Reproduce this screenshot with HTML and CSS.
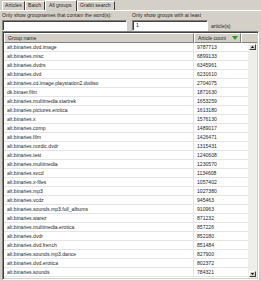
FILE: index.html
```html
<!DOCTYPE html>
<html>
<head>
<meta charset="utf-8">
<link rel="stylesheet" href="styles.css">
</head>
<body>
<div class="win">
  <div class="tabs">
    <div class="tab t1">Articles</div>
    <div class="tab t2">Batch</div>
    <div class="tab sel t3">All groups</div>
    <div class="tab t4">Grabit search</div>
  </div>
  <div class="panel">
    <div class="filters">
      <div class="f1">
        <div class="lbl">Only show groupnames that contain the word(s):</div>
        <div class="input in1"></div>
      </div>
      <div class="f2">
        <div class="lbl">Only show groups with at least</div>
        <div class="inrow">
          <div class="input in2">1</div>
          <span class="unit">article(s)</span>
        </div>
      </div>
    </div>
    <div class="list">
      <div class="header">
        <div class="hc c1">Group name</div>
        <div class="hc c2">Article count<svg class="sort" width="6" height="4" viewBox="0 0 6 4"><polygon points="0,0 6,0 3,4" fill="#1fa31f"/></svg></div>
        <div class="hc c3"></div>
      </div>
      <div class="lbody">
        <div class="rows" id="rows">
          <div class="row"><span class="c1">alt.binaries.dvd.image</span><span class="c2">9787713</span></div>
          <div class="row"><span class="c1">alt.binaries.misc</span><span class="c2">6899133</span></div>
          <div class="row"><span class="c1">alt.binaries.dvdrs</span><span class="c2">6345961</span></div>
          <div class="row"><span class="c1">alt.binaries.dvd</span><span class="c2">6231610</span></div>
          <div class="row"><span class="c1">alt.binaries.cd.image.playstation2.dvdiso</span><span class="c2">2704075</span></div>
          <div class="row"><span class="c1">dk.binaer.film</span><span class="c2">1871630</span></div>
          <div class="row"><span class="c1">alt.binaries.multimedia.startrek</span><span class="c2">1653259</span></div>
          <div class="row"><span class="c1">alt.binaries.pictures.erotica</span><span class="c2">1613180</span></div>
          <div class="row"><span class="c1">alt.binaries.x</span><span class="c2">1576130</span></div>
          <div class="row"><span class="c1">alt.binaries.comp</span><span class="c2">1489017</span></div>
          <div class="row"><span class="c1">alt.binaries.film</span><span class="c2">1426471</span></div>
          <div class="row"><span class="c1">alt.binaries.nordic.dvdr</span><span class="c2">1315431</span></div>
          <div class="row"><span class="c1">alt.binaries.test</span><span class="c2">1240608</span></div>
          <div class="row"><span class="c1">alt.binaries.multimedia</span><span class="c2">1230570</span></div>
          <div class="row"><span class="c1">alt.binaries.svcd</span><span class="c2">1134608</span></div>
          <div class="row"><span class="c1">alt.binaries.x-files</span><span class="c2">1057402</span></div>
          <div class="row"><span class="c1">alt.binaries.mp3</span><span class="c2">1027380</span></div>
          <div class="row"><span class="c1">alt.binaries.vcdz</span><span class="c2">945463</span></div>
          <div class="row"><span class="c1">alt.binaries.sounds.mp3.full_albums</span><span class="c2">910963</span></div>
          <div class="row"><span class="c1">alt.binaries.warez</span><span class="c2">871232</span></div>
          <div class="row"><span class="c1">alt.binaries.multimedia.erotica</span><span class="c2">857226</span></div>
          <div class="row"><span class="c1">alt.binaries.dvdr</span><span class="c2">852180</span></div>
          <div class="row"><span class="c1">alt.binaries.dvd.french</span><span class="c2">851484</span></div>
          <div class="row"><span class="c1">alt.binaries.sounds.mp3.dance</span><span class="c2">827900</span></div>
          <div class="row"><span class="c1">alt.binaries.dvd.erotica</span><span class="c2">802372</span></div>
          <div class="row"><span class="c1">alt.binaries.sounds</span><span class="c2">784321</span></div>
        </div>
        <div class="scroll">
          <div class="sbtn"><svg width="5" height="3" viewBox="0 0 5 3"><polygon points="2.5,0 5,3 0,3" fill="#000"/></svg></div>
          <div class="track"></div>
          <div class="sbtn"><svg width="5" height="3" viewBox="0 0 5 3"><polygon points="0,0 5,0 2.5,3" fill="#000"/></svg></div>
        </div>
      </div>
    </div>
  </div>
</div>
</body>
</html>
```
FILE: styles.css
```css
html, body {
  margin: 0;
  padding: 0;
}
body {
  width: 261px;
  height: 281px;
  overflow: hidden;
  background: #d4d0c8;
  font-family: "Liberation Sans", Arial, sans-serif;
  font-size: 5.1px;
  color: #262626;
}
.win {
  display: flex;
  flex-direction: column;
  height: 281px;
}
.tabs {
  display: flex;
  align-items: flex-end;
  height: 10px;
  padding-left: 2px;
  position: relative;
  z-index: 1;
}
.tab {
  box-sizing: border-box;
  height: 9px;
  line-height: 7px;
  padding-left: 2px;
  border-top: 1px solid #fff;
  border-left: 1px solid #fff;
  border-right: 1px solid #404040;
  white-space: nowrap;
}
.t1 { width: 23px; }
.t2 { width: 20px; }
.t3 { width: 32px; }
.t4 { width: 38px; }
.tab.sel {
  height: 11px;
  margin-bottom: -1px;
  line-height: 8px;
  padding-left: 3px;
  background: #d4d0c8;
}
.panel {
  flex: 1;
  border-top: 1px solid #fff;
  padding: 0 2px 0 2px;
  display: flex;
  flex-direction: column;
}
.filters {
  display: flex;
  gap: 5px;
  padding-top: 1px;
}
.lbl {
  line-height: 7px;
  height: 7px;
  white-space: nowrap;
}
.input {
  box-sizing: border-box;
  height: 11px;
  margin-top: 1px;
  background: #fff;
  border-top: 1px solid #808080;
  border-left: 1px solid #808080;
  border-right: 1px solid #fff;
  border-bottom: 1px solid #fff;
  box-shadow: inset 1px 1px 0 #404040;
  line-height: 9px;
  padding-left: 3px;
}
.in1 { width: 125px; }
.in2 { width: 76px; }
.inrow {
  display: flex;
  align-items: center;
  gap: 3px;
}
.unit { margin-top: 2px; }
.list {
  margin-top: 0px;
  width: 257px;
  height: 249px;
  box-sizing: border-box;
  border-top: 1px solid #808080;
  border-left: 1px solid #808080;
  border-right: 1px solid #fff;
  border-bottom: 1px solid #fff;
  box-shadow: inset 1px 1px 0 #404040, inset -1px -1px 0 #d4d0c8;
  padding: 1px;
  display: flex;
  flex-direction: column;
}
.header {
  display: flex;
  height: 10px;
}
.hc {
  box-sizing: border-box;
  height: 10px;
  line-height: 8px;
  border-top: 1px solid #fff;
  border-left: 1px solid #fff;
  border-right: 1px solid #808080;
  border-bottom: 1px solid #808080;
  padding-left: 3px;
  white-space: nowrap;
}
.header .c1 { width: 190px; }
.header .c2 {
  width: 47px;
  display: flex;
  align-items: center;
}
.header .c3 { flex: 1; border-right: none; }
.sort { margin-left: 6px; }
.lbody {
  flex: 1;
  display: flex;
  min-height: 0;
}
.rows {
  flex: 1;
  background: #fff;
  overflow: hidden;
}
.row {
  display: flex;
  height: 9px;
  box-sizing: border-box;
  border-bottom: 1px solid #e4e4e4;
  line-height: 8px;
  white-space: nowrap;
}
.row .c1 {
  width: 190px;
  box-sizing: border-box;
  padding-left: 3px;
  border-right: 1px solid #e4e4e4;
}
.row .c2 {
  padding-left: 3px;
}
.scroll {
  width: 9px;
  background: #efeeea;
  display: flex;
  flex-direction: column;
  align-items: center;
  padding: 1px 0;
  box-sizing: border-box;
}
.sbtn {
  width: 7px;
  height: 6px;
  box-sizing: border-box;
  background: #d4d0c8;
  border-top: 1px solid #fff;
  border-left: 1px solid #fff;
  border-right: 1px solid #404040;
  border-bottom: 1px solid #404040;
  display: flex;
  align-items: center;
  justify-content: center;
}
.sbtn svg { width: 3px; height: 2px; }
.track { flex: 1; }
```
